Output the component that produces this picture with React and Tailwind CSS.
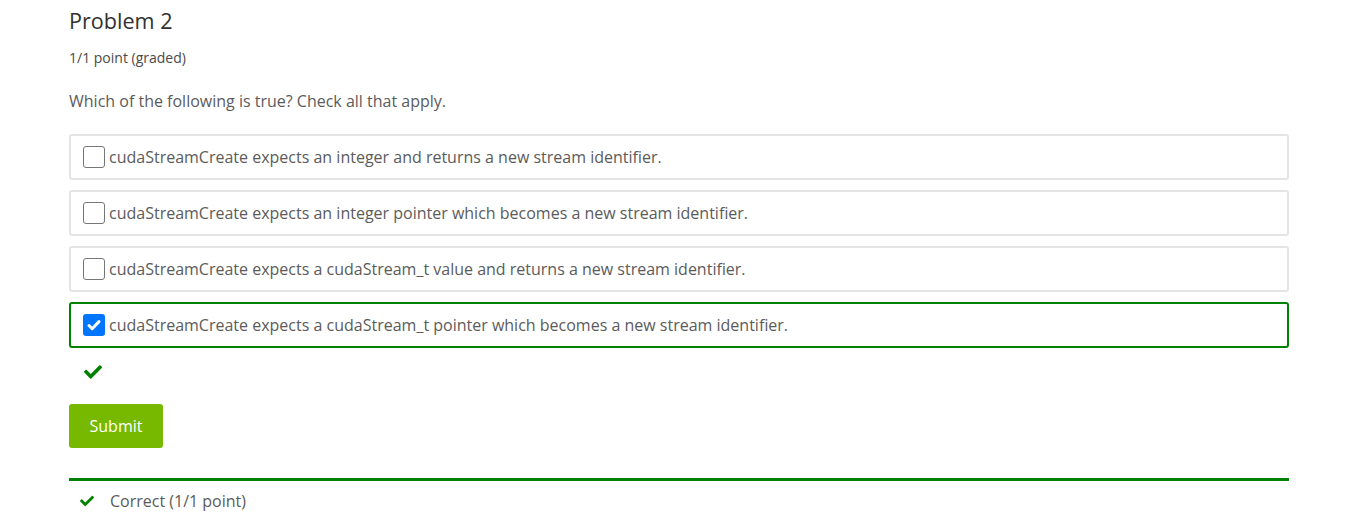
import React from 'react'

const options = [
  'cudaStreamCreate expects an integer and returns a new stream identifier.',
  'cudaStreamCreate expects an integer pointer which becomes a new stream identifier.',
  'cudaStreamCreate expects a cudaStream_t value and returns a new stream identifier.',
  'cudaStreamCreate expects a cudaStream_t pointer which becomes a new stream identifier.',
]

const Check = ({ className }) => (
  <svg viewBox="0 0 512 512" className={className} fill="currentColor">
    <path d="M173.9 439.4l-166.4-166.4c-10-10-10-26.2 0-36.2l36.2-36.2c10-10 26.2-10 36.2 0L192 312.7 432.1 72.6c10-10 26.2-10 36.2 0l36.2 36.2c10 10 10 26.2 0 36.2l-294.4 294.4c-10 10-26.2 10-36.2 0z" />
  </svg>
)

const Option = ({ text, checked }) => (
  <div
    className={
      'flex items-center h-[46px] rounded-[3px] border-2 px-[12px] ' +
      (checked ? 'border-[#008100]' : 'border-[#e4e4e4]')
    }
  >
    {checked ? (
      <span className="w-[22px] h-[22px] rounded-[3px] bg-[#0075ff] flex items-center justify-center">
        <svg viewBox="0 0 16 16" className="w-[16px] h-[16px]">
          <path d="M3 8.5l3.2 3.2L13 4.6" fill="none" stroke="white" strokeWidth="3" strokeLinecap="round" strokeLinejoin="round" />
        </svg>
      </span>
    ) : (
      <span className="w-[22px] h-[22px] rounded-[3px] border border-[#767676] bg-white" />
    )}
    <span className="ml-[4px] text-[16px] text-[#5b5b5b]">{text}</span>
  </div>
)

export default function App() {
  return (
    <div className="bg-white h-[524px] px-[69px] font-['Open_Sans',sans-serif] text-[#5b5b5b] overflow-hidden">
      <div className="w-[1220px]">
        <h3 className="pt-[7px] text-[21.6px] leading-[28px] text-[#313131]">Problem 2</h3>
        <div className="mt-[14px] text-[14px] leading-[18px] text-[#4a4a4a]">1/1 point (graded)</div>
        <p className="mt-[23px] text-[16px] leading-[22px]">Which of the following is true? Check all that apply.</p>
        <div className="mt-[22px] flex flex-col gap-[10px]">
          {options.map((o, i) => (
            <Option key={i} text={o} checked={i === 3} />
          ))}
        </div>
        <div className="mt-[15px] pl-[15px] h-[14px] text-[#008100]">
          <Check className="w-[18px] h-[18px]" />
        </div>
        <button className="mt-[27px] h-[44px] w-[94px] rounded-[3px] bg-[#76b900] text-white text-[16px]">
          Submit
        </button>
        <div className="mt-[30px] border-t-[3px] border-[#008100] flex items-center h-[42px] pl-[11px]">
          <Check className="w-[14px] h-[14px] text-[#008100]" />
          <span className="ml-[16px] text-[16px] text-[#5b5b5b]">Correct (1/1 point)</span>
        </div>
      </div>
    </div>
  )
}
